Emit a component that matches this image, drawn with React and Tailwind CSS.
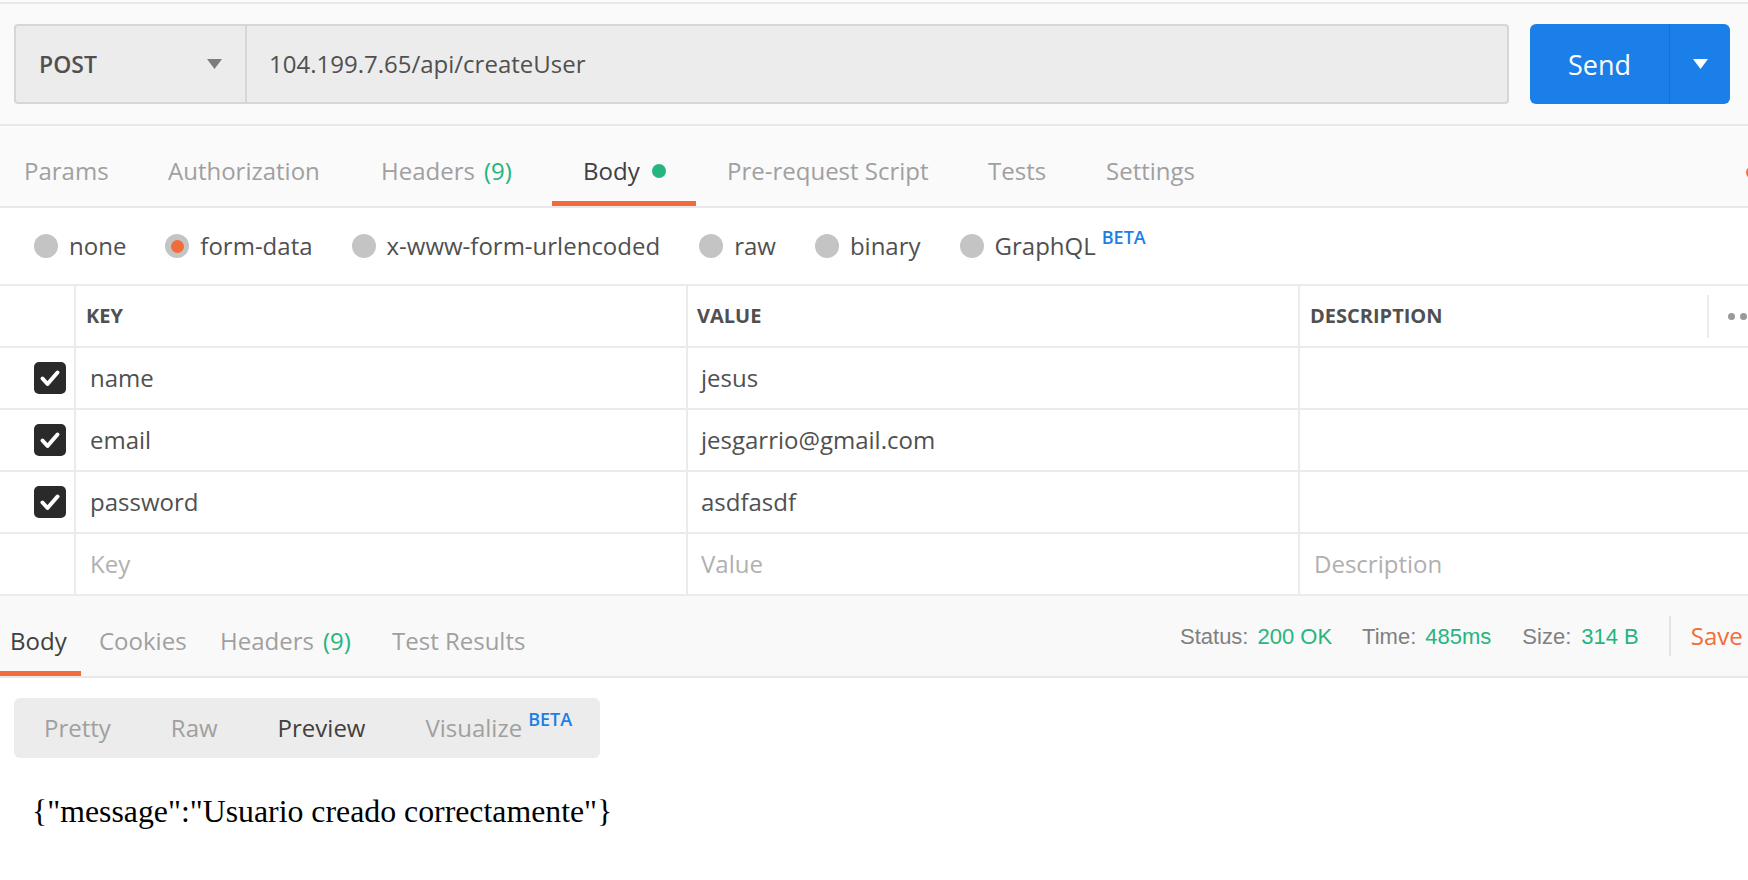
import React from 'react'

const requestTabs = [
    { label: "Params", w: "w-[137px]", pl: "pl-[24px]" },
    { label: "Authorization", w: "w-[213px]", pl: "pl-[31px]" },
    { label: "Headers", count: "(9)", w: "w-[202px]", pl: "pl-[31px]" },
    { label: "Body", dot: true, active: true, w: "w-[144px]", pl: "pl-[31px]" },
    { label: "Pre-request Script", w: "w-[261px]", pl: "pl-[31px]" },
    { label: "Tests", w: "w-[118px]", pl: "pl-[31px]" },
    { label: "Settings", w: "w-[160px]", pl: "pl-[31px]" },
]

const bodyTypes = [
    { label: "none" },
    { label: "form-data", checked: true },
    { label: "x-www-form-urlencoded" },
    { label: "raw" },
    { label: "binary" },
    { label: "GraphQL", beta: true },
]

const rows = [
    { key: "name", value: "jesus" },
    { key: "email", value: "jesgarrio@gmail.com" },
    { key: "password", value: "asdfasdf" },
]

const responseTabs = [
    { label: "Body", active: true, w: "w-[81px]", pl: "pl-[10px]" },
    { label: "Cookies", w: "w-[121px]", pl: "pl-[18px]" },
    { label: "Headers", count: "(9)", w: "w-[172px]", pl: "pl-[18px]" },
    { label: "Test Results", w: "w-[200px]", pl: "pl-[18px]" },
]

function Triangle({ className }) {
    return (
        <svg width="15" height="10" viewBox="0 0 15 10" className={className}>
            <path d="M0 0h15L7.5 10z" fill="currentColor" />
        </svg>
    )
}

function Checkbox() {
    return (
        <div className="w-[32px] h-[32px] rounded-[5px] bg-[#2a2a2a] flex items-center justify-center">
            <svg width="32" height="32" viewBox="0 0 32 32">
                <path d="M8.5 16.5l5 5.5L23.5 10.5" fill="none" stroke="white" strokeWidth="4" strokeLinecap="round" strokeLinejoin="round" />
            </svg>
        </div>
    )
}

function Beta() {
    return <span className="relative -top-[11px] ml-[6px] text-[18px] font-semibold text-[#1a7fe8]">BETA</span>
}

export default function App() {
    return (
        <div className="w-[1748px] h-[880px] bg-white overflow-hidden font-['Open_Sans',sans-serif]">
            <div className="h-[2px] bg-[#fafafa]" />

            {/* request line */}
            <div className="h-[124px] bg-[#fafafa] border-t-2 border-b-2 border-[#e8e8e8] flex items-center pl-[14px] pr-[18px] gap-[21px]">
                <div className="flex-1 h-[80px] flex rounded-[4px] border-2 border-[#d6d6d6] bg-[#ececec]">
                    <div className="w-[231px] flex items-center justify-between pl-[23px] pr-[23px] border-r-2 border-[#d6d6d6]">
                        <span className="text-[23px] font-semibold text-[#505050]">POST</span>
                        <Triangle className="text-[#7d7d7d]" />
                    </div>
                    <div className="flex items-center pl-[22px] text-[24px] text-[#505050]">104.199.7.65/api/createUser</div>
                </div>
                <div className="w-[200px] h-[80px] flex rounded-[6px] bg-[#1b7fe9] text-white">
                    <div className="w-[140px] flex items-center justify-center pt-[2px] text-[27px] border-r border-[#1771d4]">Send</div>
                    <div className="flex-1 flex items-center justify-center">
                        <Triangle className="text-white" />
                    </div>
                </div>
            </div>

            {/* request tabs */}
            <div className="h-[82px] bg-[#fafafa] border-b-2 border-[#e8e8e8] flex overflow-hidden">
                {requestTabs.map((tab) => (
                    <div key={tab.label} className={`${tab.w} ${tab.pl} shrink-0 relative h-full flex items-center pt-[10px] text-[24px] ${tab.active ? "text-[#404040]" : "text-[#a0a0a0]"}`}>
                        <span>{tab.label}</span>
                        {tab.count && <span className="ml-[9px] text-[#26b47f]">{tab.count}</span>}
                        {tab.dot && <span className="ml-[12px] w-[14px] h-[14px] rounded-full bg-[#26b47f]" />}
                        {tab.active && <div className="absolute left-0 right-0 bottom-0 h-[5px] bg-[#f26b3a]" />}
                    </div>
                ))}
                <div className="ml-auto mr-[-11px] self-center mt-[12px] w-[13px] h-[13px] rounded-full bg-[#f26b3a] shrink-0" />
            </div>

            {/* body type */}
            <div className="h-[76px] flex items-center pl-[34px] gap-[39px]">
                {bodyTypes.map((t) => (
                    <div key={t.label} className="flex items-center gap-[11px]">
                        <div className="w-[24px] h-[24px] rounded-full bg-[#c4c4c4] flex items-center justify-center">
                            {t.checked && <div className="w-[13px] h-[13px] rounded-full bg-[#f26b3a]" />}
                        </div>
                        <span className="text-[24px] text-[#505050]">
                            {t.label}
                            {t.beta && <Beta />}
                        </span>
                    </div>
                ))}
            </div>

            {/* form data table */}
            <div className="border-t-2 border-[#ebebeb]">
                <div className="grid grid-cols-[74px_612px_612px_1fr] h-[62px] border-b-2 border-[#ebebeb] text-[20px] font-bold text-[#505050]">
                    <div />
                    <div className="border-l-2 border-[#ebebeb] flex items-center pl-[10px]">KEY</div>
                    <div className="border-l-2 border-[#ebebeb] flex items-center pl-[9px]">VALUE</div>
                    <div className="border-l-2 border-[#ebebeb] flex items-center pl-[10px]">
                        <span className="w-[397px]">DESCRIPTION</span>
                        <div className="w-[2px] h-[43px] bg-[#ebebeb]" />
                        <div className="flex gap-[5px] pl-[19px]">
                            <span className="w-[7px] h-[7px] rounded-full bg-[#9a9a9a]" />
                            <span className="w-[7px] h-[7px] rounded-full bg-[#9a9a9a]" />
                            <span className="w-[7px] h-[7px] rounded-full bg-[#9a9a9a]" />
                        </div>
                    </div>
                </div>
                {rows.map((r) => (
                    <div key={r.key} className="grid grid-cols-[74px_612px_612px_1fr] h-[62px] border-b-2 border-[#ebebeb] text-[24px] text-[#505050]">
                        <div className="flex items-center pl-[34px]">
                            <Checkbox />
                        </div>
                        <div className="border-l-2 border-[#ebebeb] flex items-center pl-[14px]">{r.key}</div>
                        <div className="border-l-2 border-[#ebebeb] flex items-center pl-[13px]">{r.value}</div>
                        <div className="border-l-2 border-[#ebebeb]" />
                    </div>
                ))}
                <div className="grid grid-cols-[74px_612px_612px_1fr] h-[62px] border-b-2 border-[#ebebeb] text-[24px] text-[#b0b0b0]">
                    <div />
                    <div className="border-l-2 border-[#ebebeb] flex items-center pl-[14px]">Key</div>
                    <div className="border-l-2 border-[#ebebeb] flex items-center pl-[13px]">Value</div>
                    <div className="border-l-2 border-[#ebebeb] flex items-center pl-[14px]">Description</div>
                </div>
            </div>

            {/* response bar */}
            <div className="h-[82px] bg-[#f9f9f9] border-b-2 border-[#e8e8e8] flex overflow-hidden">
                <div className="w-[1180px] shrink-0 flex">
                    {responseTabs.map((tab) => (
                        <div key={tab.label} className={`${tab.w} ${tab.pl} shrink-0 relative h-full flex items-center pt-[10px] text-[24px] ${tab.active ? "text-[#404040]" : "text-[#a0a0a0]"}`}>
                            <span>{tab.label}</span>
                            {tab.count && <span className="ml-[9px] text-[#26b47f]">{tab.count}</span>}
                            {tab.active && <div className="absolute left-0 right-0 bottom-0 h-[5px] bg-[#f26b3a]" />}
                        </div>
                    ))}
                </div>
                <div className="flex items-center shrink-0 whitespace-nowrap font-['Liberation_Sans',Arial,sans-serif] text-[22px]">
                    <span className="text-[#808080]">Status:</span>
                    <span className="ml-[9px] text-[#26b47f]">200 OK</span>
                    <span className="ml-[30px] text-[#808080]">Time:</span>
                    <span className="ml-[9px] text-[#26b47f]">485ms</span>
                    <span className="ml-[31px] text-[#808080]">Size:</span>
                    <span className="ml-[10px] text-[#26b47f]">314 B</span>
                    <div className="ml-[30px] w-[2px] h-[40px] bg-[#e4e4e4]" />
                    <span className="ml-[20px] font-['Open_Sans',sans-serif] text-[24px] text-[#f26b3a]">Save</span>
                </div>
            </div>

            {/* response body */}
            <div className="pt-[20px] pl-[14px]">
                <div className="inline-flex h-[60px] items-center rounded-[6px] bg-[#ececec] text-[24px] text-[#a0a0a0]">
                    <span className="px-[30px]">Pretty</span>
                    <span className="px-[30px]">Raw</span>
                    <span className="px-[30px] text-[#404040]">Preview</span>
                    <span className="pl-[30px] pr-[28px]">
                        Visualize
                        <Beta />
                    </span>
                </div>
                <div className="mt-[30px] ml-[18px] font-['Liberation_Serif','Times_New_Roman',serif] text-[31.8px] text-black">
                    {'{"message":"Usuario creado correctamente"}'}
                </div>
            </div>
        </div>
    )
}
